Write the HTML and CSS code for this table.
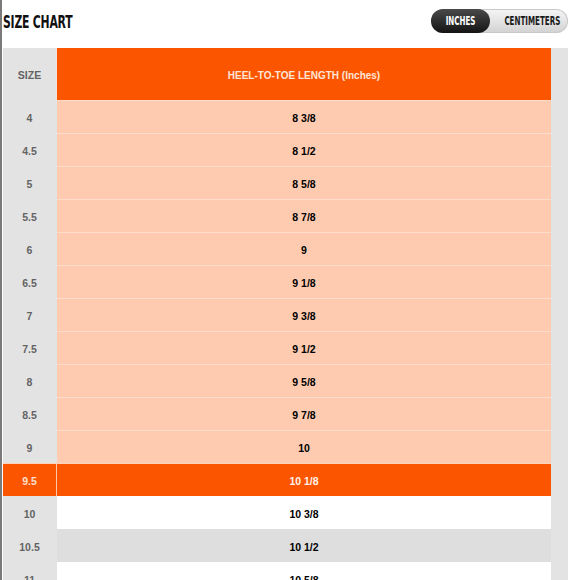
FILE: index.html
```html
<!DOCTYPE html>
<html>
<head>
<meta charset="utf-8">
<link rel="stylesheet" href="styles.css">
</head>
<body>
<div class="page">
  <div class="topbar">
    <h1 class="title">SIZE CHART</h1>
    <div class="toggle">
      <span class="opt active"><span class="lbl">INCHES</span></span>
      <span class="opt"><span class="lbl">CENTIMETERS</span></span>
    </div>
  </div>
  <div class="chart">
    <div class="row head">
      <div class="size">SIZE</div>
      <div class="val">HEEL-TO-TOE LENGTH (Inches)</div>
    </div>
    <div class="row peach"><div class="size">4</div><div class="val">8 3/8</div></div>
    <div class="row peach"><div class="size">4.5</div><div class="val">8 1/2</div></div>
    <div class="row peach"><div class="size">5</div><div class="val">8 5/8</div></div>
    <div class="row peach"><div class="size">5.5</div><div class="val">8 7/8</div></div>
    <div class="row peach"><div class="size">6</div><div class="val">9</div></div>
    <div class="row peach"><div class="size">6.5</div><div class="val">9 1/8</div></div>
    <div class="row peach"><div class="size">7</div><div class="val">9 3/8</div></div>
    <div class="row peach"><div class="size">7.5</div><div class="val">9 1/2</div></div>
    <div class="row peach"><div class="size">8</div><div class="val">9 5/8</div></div>
    <div class="row peach"><div class="size">8.5</div><div class="val">9 7/8</div></div>
    <div class="row peach"><div class="size">9</div><div class="val">10</div></div>
    <div class="row current"><div class="size">9.5</div><div class="val">10 1/8</div></div>
    <div class="row white"><div class="size">10</div><div class="val">10 3/8</div></div>
    <div class="row grey"><div class="size">10.5</div><div class="val">10 1/2</div></div>
    <div class="row white"><div class="size">11</div><div class="val">10 5/8</div></div>
  </div>
</div>
</body>
</html>
```
FILE: styles.css
```css
html, body {
  margin: 0;
  padding: 0;
  background: #fff;
  height: 580px;
  overflow: hidden;
}
.page {
  border-left: 2px solid #7a7a7a;
  padding-left: 1px;
  height: 580px;
  font-family: "Liberation Sans", Arial, sans-serif;
}
.topbar {
  display: flex;
  justify-content: space-between;
  align-items: flex-start;
  height: 48px;
  width: 565px;
}
.title {
  margin: 12px 0 0 0;
  font-family: "DejaVu Sans Condensed", "DejaVu Sans", sans-serif;
  font-weight: bold;
  font-size: 18.5px;
  line-height: 20px;
  color: #111;
  letter-spacing: -0.3px;
  transform: scaleX(0.65);
  transform-origin: left center;
  white-space: nowrap;
}
.toggle {
  margin-top: 9px;
  display: flex;
  height: 24px;
  width: 137px;
  border-radius: 12px;
  background: linear-gradient(#f6f6f6, #d2d2d2);
  box-shadow: inset 0 0 0 1px #c8c8c8;
}
.opt {
  display: flex;
  align-items: center;
  justify-content: center;
  font-family: "DejaVu Sans Condensed", "DejaVu Sans", sans-serif;
  font-weight: bold;
  font-size: 12px;
  color: #1a1a1a;
  flex: 1;
  white-space: nowrap;
  overflow: visible;
}
.lbl {
  display: inline-block;
  transform: scaleX(0.66);
}
.opt.active {
  flex: 0 0 59px;
  border-radius: 12px;
  background: linear-gradient(#4a4a4a, #141414);
  color: #fff;
}
.chart {
  width: 565px;
  background: #e3e3e3;
  font-weight: bold;
  font-size: 10.5px;
}
.row {
  display: grid;
  grid-template-columns: 53px 495px;
  height: 33px;
}
.row .size {
  display: flex;
  align-items: center;
  justify-content: center;
  color: #636363;
  font-size: 10.5px;
  padding-top: 2px;
}
.row .val {
  display: flex;
  align-items: center;
  justify-content: center;
  color: #000;
  margin-left: 1px;
  padding-top: 2px;
}
.row.head {
  height: 52px;
}
.row.head .val {
  background: #fc5500;
  color: #fde6d8;
  font-size: 10px;
  border-left: 1px solid #f4e2d8;
  margin-left: 0;
}
.row.peach .val {
  background: #fecbb0;
  border-top: 1px solid #fddccb;
}
.row.current .size {
  background: #fc5500;
  color: #fde0cc;
  border-top: 1px solid #fdd2bb;
}
.row.current .val {
  background: #fc5500;
  color: #fff3ea;
  border-top: 1px solid #fdd2bb;
  border-left: 1px solid #fbc7aa;
  margin-left: 0;
}
.row.white .val {
  background: #fff;
}
.row.grey .val {
  background: #dedede;
}
```
